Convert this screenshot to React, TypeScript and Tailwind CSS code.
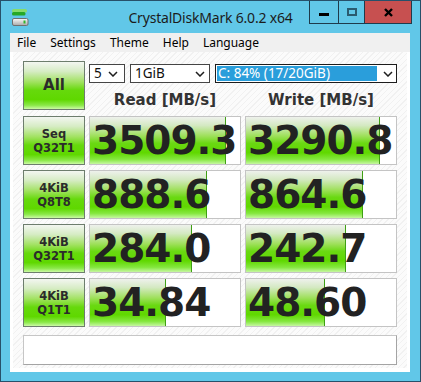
import React from "react";

type TRow = {
  label: string[];
  read: string;
  write: string;
  readBar: number;
  writeBar: number;
};

const rows: TRow[] = [
  { label: ["Seq", "Q32T1"], read: "3509.3", write: "3290.8", readBar: 136, writeBar: 134 },
  { label: ["4KiB", "Q8T8"], read: "888.6", write: "864.6", readBar: 117, writeBar: 117 },
  { label: ["4KiB", "Q32T1"], read: "284.0", write: "242.7", readBar: 102, writeBar: 100 },
  { label: ["4KiB", "Q1T1"], read: "34.84", write: "48.60", readBar: 76, writeBar: 79 },
];

const menu = ["File", "Settings", "Theme", "Help", "Language"];

const Chevron = () => (
  <svg width="10" height="6" viewBox="0 0 10 6" className="shrink-0">
    <path d="M1 1l4 4 4-4" stroke="#1e1e1e" strokeWidth="1.5" fill="none" />
  </svg>
);

const AppIcon = () => (
  <svg width="17" height="17" viewBox="0 0 17 17">
    <rect x="0" y="0" width="15" height="3.5" rx="1.5" fill="#86dc6c" />
    <rect x="0" y="3" width="13.5" height="3.5" rx="1.5" fill="#26a826" />
    <defs>
      <linearGradient id="drv" x1="0" y1="0" x2="0" y2="1">
        <stop offset="0" stopColor="#fbfbfb" />
        <stop offset="1" stopColor="#a9a9a9" />
      </linearGradient>
    </defs>
    <rect x="0.5" y="9.5" width="15.5" height="7" rx="1.5" fill="url(#drv)" stroke="#707070" />
    <rect x="11.5" y="11.5" width="2" height="3" fill="#2fb52f" />
  </svg>
);

// one result cell: gray box, green bar, big number on top
const Cell = ({ value, bar }: { value: string; bar: number }) => (
  <div className="relative h-[49px] w-[152px] overflow-hidden border border-[#c4c4c4] bg-white">
    <div
      className="absolute inset-y-0 left-0 border-r border-[#3f9f14] bg-[linear-gradient(to_bottom,#eef1ec_0%,#d4e9c2_18%,#9fe05c_40%,#6ad912_56%,#60d800_76%,#84e73e_90%,#c6f7a2_100%)]"
      style={{ width: bar }}
    />
    <span className="relative flex h-full items-center pl-[2px] font-['DejaVu_Sans',sans-serif] text-[39px] font-bold leading-none tracking-[-1px] text-[#222]">
      {value}
    </span>
  </div>
);

const GreenButton = ({ children }: { children: React.ReactNode }) => (
  <div className="flex h-[49px] w-[62px] shrink-0 flex-col items-center justify-center border border-[#6d7d6d] bg-[linear-gradient(to_bottom,#f3f6f1_0%,#d6ecc4_20%,#a2e262_42%,#66d90c_60%,#5fd800_80%,#8ae848_92%,#ccfaa6_100%)] font-['DejaVu_Sans',sans-serif] font-bold text-[#2b2b2b]">
    {children}
  </div>
);

const App = () => {
  return (
    <div className="flex h-[382px] w-[421px] flex-col border border-[#27506a] bg-[#61c7e8] font-['Noto_Sans',sans-serif]">
      {/* Title bar */}
      <div className="grid h-[32px] shrink-0 grid-cols-[1fr_auto_1fr] items-start">
        <div className="pl-[11px] pt-[8px]">
          <AppIcon />
        </div>
        <div className="pt-[6px] text-[14px] tracking-[-0.2px] text-[#1b1b1b]">
          CrystalDiskMark 6.0.2 x64
        </div>
        <div className="flex justify-end pr-[8px]">
          <div className="flex h-[23px] border-x border-b border-[#1e3b4c]">
            <div className="flex w-[28px] items-center justify-center pt-[4px]">
              <div className="h-[3px] w-[10px] bg-black" />
            </div>
            <div className="flex w-[26px] items-center justify-center border-l border-[#1e3b4c]">
              <div className="h-[8px] w-[10px] border-2 border-[#2a5b70]" />
            </div>
            <div className="flex w-[47px] items-center justify-center border-l border-[#1e3b4c] bg-[#c75050]">
              <svg width="9" height="9" viewBox="0 0 9 9">
                <path d="M1 1l7 7M8 1L1 8" stroke="#000" strokeWidth="2.4" />
              </svg>
            </div>
          </div>
        </div>
      </div>

      {/* Client area */}
      <div className="mx-[9px] mb-[9px] mr-[10px] flex flex-1 flex-col">
        {/* Menu */}
        <div className="flex h-[19px] items-center bg-[#f0f0f0] text-[12px] text-black">
          {menu.map((m) => (
            <span key={m} className="px-[7px]">
              {m}
            </span>
          ))}
        </div>

        <div className="flex flex-1 flex-col border-x-[3px] border-b-[4px] border-white bg-[repeating-linear-gradient(135deg,#fbfbfb_0px,#fbfbfb_3px,#f1f1f1_3px,#f1f1f1_4px)] px-[10px] pt-[9px]">
          {/* Top row */}
          <div className="flex gap-[4px]">
            <GreenButton>
              <span className="text-[15px]">All</span>
            </GreenButton>
            <div className="flex w-[308px] flex-col">
              <div className="mt-[3px] flex h-[19px] gap-[5px] text-[13.5px] text-[#111]">
                <div className="flex w-[36px] items-center justify-between border border-[#454545] bg-white pl-[4px] pr-[6px]">
                  <span>5</span>
                  <Chevron />
                </div>
                <div className="flex w-[80px] items-center justify-between border border-[#454545] bg-white pl-[4px] pr-[4px]">
                  <span>1GiB</span>
                  <Chevron />
                </div>
                <div className="flex w-[182px] items-center border border-[#1c1c1c] bg-white p-[1px] pr-[3px]">
                  <span className="flex h-full w-[160px] items-center bg-[#2a9edb] pl-[1px] text-white">
                    C: 84% (17/20GiB)
                  </span>
                  <span className="flex flex-1 justify-end">
                    <Chevron />
                  </span>
                </div>
              </div>
              <div className="mt-[8px] grid grid-cols-[152px_152px] gap-[4px] font-['DejaVu_Sans',sans-serif] text-[15px] font-bold leading-[18px] text-[#333]">
                <span className="text-center">Read [MB/s]</span>
                <span className="text-center">Write [MB/s]</span>
              </div>
            </div>
          </div>

          {/* Results */}
          <div className="mt-[6px] flex flex-col gap-[5px]">
            {rows.map((r) => (
              <div key={r.label.join("-") + r.read} className="flex gap-[4px]">
                <GreenButton>
                  {r.label.map((l) => (
                    <span key={l} className="text-[11.5px] leading-[14px]">
                      {l}
                    </span>
                  ))}
                </GreenButton>
                <Cell value={r.read} bar={r.readBar} />
                <Cell value={r.write} bar={r.writeBar} />
              </div>
            ))}
          </div>

          {/* Comment box */}
          <div className="mt-[8px] h-[30px] w-[374px] border border-[#c6c6c6] border-b-[#a4a4a4] border-r-[#a4a4a4] bg-white" />
        </div>
      </div>
    </div>
  );
};

export default App;
